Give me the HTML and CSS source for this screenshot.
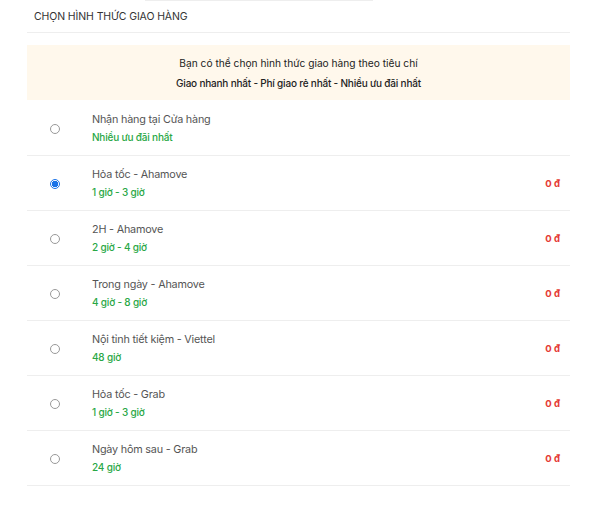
FILE: index.html
```html
<!DOCTYPE html>
<html lang="vi">
<head>
<meta charset="utf-8">
<link rel="stylesheet" href="styles.css">
</head>
<body>
<div class="topline"></div>
<div class="panel">
  <div class="head">CHỌN HÌNH THỨC GIAO HÀNG</div>
  <div class="banner">
    <div>Bạn có thể chọn hình thức giao hàng theo tiêu chí</div>
    <div class="strong">Giao nhanh nhất - Phí giao rẻ nhất - Nhiều ưu đãi nhất</div>
  </div>
  <div class="list">
    <div class="row">
      <span class="radio"></span>
      <div class="info"><div class="title">Nhận hàng tại Cửa hàng</div><div class="sub">Nhiều ưu đãi nhất</div></div>
    </div>
    <div class="row">
      <span class="radio on"></span>
      <div class="info"><div class="title">Hỏa tốc - Ahamove</div><div class="sub">1 giờ - 3 giờ</div></div>
      <div class="price">0 đ</div>
    </div>
    <div class="row">
      <span class="radio"></span>
      <div class="info"><div class="title">2H - Ahamove</div><div class="sub">2 giờ - 4 giờ</div></div>
      <div class="price">0 đ</div>
    </div>
    <div class="row">
      <span class="radio"></span>
      <div class="info"><div class="title">Trong ngày - Ahamove</div><div class="sub">4 giờ - 8 giờ</div></div>
      <div class="price">0 đ</div>
    </div>
    <div class="row">
      <span class="radio"></span>
      <div class="info"><div class="title">Nội tỉnh tiết kiệm - Viettel</div><div class="sub">48 giờ</div></div>
      <div class="price">0 đ</div>
    </div>
    <div class="row">
      <span class="radio"></span>
      <div class="info"><div class="title">Hỏa tốc - Grab</div><div class="sub">1 giờ - 3 giờ</div></div>
      <div class="price">0 đ</div>
    </div>
    <div class="row">
      <span class="radio"></span>
      <div class="info"><div class="title">Ngày hôm sau - Grab</div><div class="sub">24 giờ</div></div>
      <div class="price">0 đ</div>
    </div>
  </div>
</div>
</body>
</html>
```
FILE: styles.css
```css
html, body { margin: 0; padding: 0; background: #fff; }
body { font-family: Inter, "Noto Sans", sans-serif; color: #333; }
.topline { margin-left: 145px; width: 228px; height: 1px; background: #eee; }
.panel { margin-left: 27px; width: 543px; }
.head {
  height: 31px; display: flex; align-items: center; padding-left: 7px;
  font-size: 10.5px; color: #333; border-bottom: 1px solid #eee; letter-spacing: -0.1px;
}
.banner {
  margin-top: 12px; height: 55px; background: #fff8ec;
  display: flex; flex-direction: column; align-items: center; justify-content: center;
  font-size: 10.2px; line-height: 20px; color: #222;
}
.banner .strong { font-weight: 500; font-size: 10px; letter-spacing: -0.2px; }
.list { margin-top: 1px; }
.row {
  height: 54px; display: flex; align-items: center; border-bottom: 1px solid #eee;
}
.radio {
  width: 10px; height: 10px; border: 1px solid #999; border-radius: 50%;
  margin-left: 23px; margin-right: 32px; margin-top: 1px; box-sizing: border-box; flex: none;
}
.radio.on { border-color: #1a73e8; background: radial-gradient(circle, #1a73e8 0 3px, #fff 3.5px); }
.info { flex: 1; display: flex; flex-direction: column; gap: 5px; }
.title { font-size: 10.8px; color: #555; letter-spacing: -0.2px; }
.sub { font-size: 10px; color: #28a745; font-weight: 500; letter-spacing: -0.2px; }
.price { font-size: 9.5px; font-weight: 700; color: #e53935; margin-right: 10px; }
```
